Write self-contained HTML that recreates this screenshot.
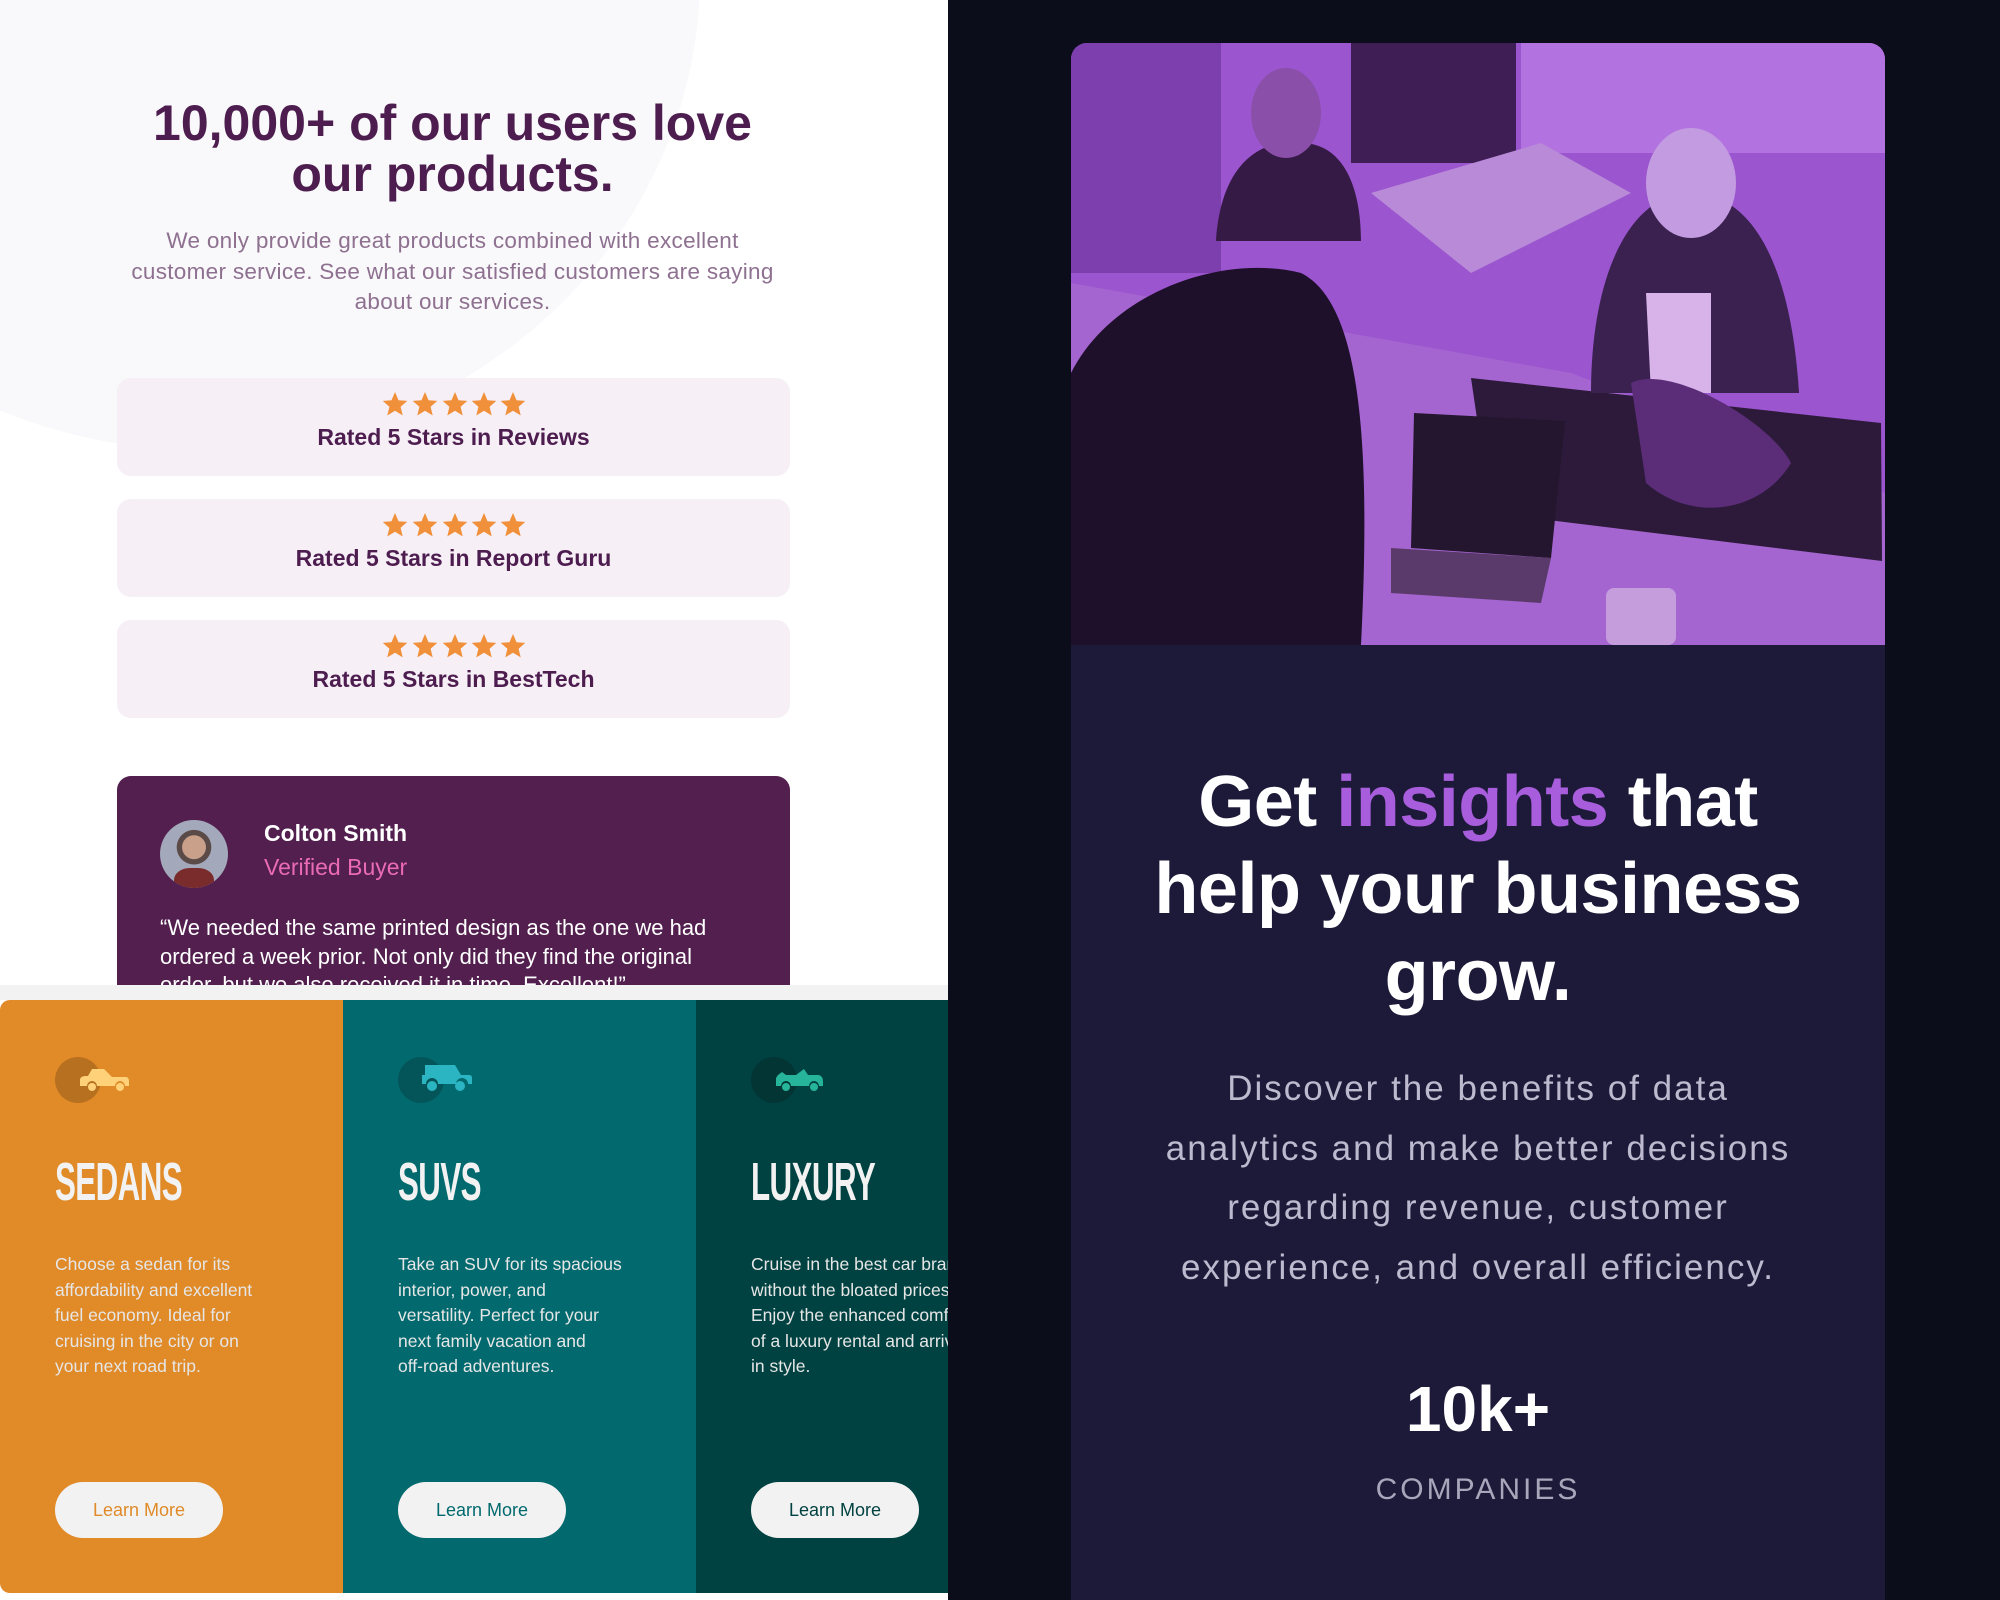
<!DOCTYPE html>
<html><head><meta charset="utf-8"><style>
*{margin:0;padding:0;box-sizing:border-box}
html{width:2000px;height:1600px;overflow:hidden}
body{width:2000px;height:1600px;overflow:hidden;background:#0b0d1a;font-family:"Liberation Sans",sans-serif;position:relative}
.left{position:absolute;left:0;top:0;width:948px;height:1600px;background:#fff;overflow:hidden}
.blob{position:absolute;left:-300px;top:-500px;width:1000px;height:950px;border-radius:50%;background:#f9f8fa}
h1{position:absolute;left:0;width:905px;top:98px;text-align:center;color:#4d1d4f;font-size:50px;line-height:51px;font-weight:bold}
.lp{position:absolute;left:120px;width:665px;top:226px;text-align:center;color:#8e7090;font-size:22.5px;line-height:30.5px;letter-spacing:.3px}
.rc{position:absolute;left:117px;width:673px;height:98px;background:#f6eff6;border-radius:14px;text-align:center;color:#4d1d4f;font-weight:bold;font-size:23px}
.rc .st{margin-top:14px;height:28px}
.rc .t{margin-top:4px}
.tm{position:absolute;left:117px;top:776px;width:673px;height:260px;background:#521f4f;border-radius:14px;color:#fff}
.av{position:absolute;left:43px;top:44px;width:68px;height:68px;border-radius:50%;background:radial-gradient(circle at 50% 40%,#c9a08a 0 22%,#5a4a48 23% 32%,#a3a8ba 33%);overflow:hidden}
.av:after{content:"";position:absolute;left:14px;top:48px;width:40px;height:30px;border-radius:40% 40% 0 0;background:#7a2b2b}
.nm{position:absolute;left:147px;top:44px;font-size:23px;font-weight:bold}
.vb{position:absolute;left:147px;top:78px;font-size:23px;color:#ea6bb5}
.q{position:absolute;left:43px;top:138px;width:565px;font-size:22px;line-height:28.5px}
.strip{position:absolute;left:0;top:985px;width:948px;height:15px;background:#f2f2f2}
.cars{position:absolute;left:0;top:1000px;width:948px;height:593px;overflow:hidden;border-radius:10px 0 0 10px}
.col{position:absolute;top:0;height:593px}
.ic{position:absolute;left:55px;top:57px;width:46px;height:46px;border-radius:50%}
.ic svg{position:absolute;left:23px;top:10px}
.col h2{position:absolute;left:55px;top:152px;font-size:54px;line-height:60px;color:#f2f2f2;font-weight:bold;transform:scaleX(.58);transform-origin:left;letter-spacing:-1px}
.col p{position:absolute;left:55px;top:252px;width:240px;font-size:17.5px;line-height:25.6px;color:#e6e6e6;white-space:nowrap}
.btn{position:absolute;left:55px;top:482px;width:168px;height:56px;border-radius:28px;background:#f2f2f2;font-size:18px;text-align:center;line-height:56px}
.card{position:absolute;left:1071px;top:43px;width:814px;height:1557px;background:#1c1a38;border-radius:16px 16px 0 0;overflow:hidden}
.card h3{position:absolute;left:0;width:814px;top:716px;text-align:center;color:#fff;font-size:72px;line-height:87px;font-weight:bold;letter-spacing:-.5px}
.card h3 span{color:#a85edc}
.card .dp{position:absolute;left:0;width:814px;top:1016px;text-align:center;color:#bdb9cf;font-size:35px;line-height:59.5px;letter-spacing:2px;white-space:nowrap}
.big{position:absolute;left:0;width:814px;text-align:center;color:#fff;font-weight:bold;font-size:64px}
.lab{position:absolute;left:0;width:814px;text-align:center;color:#a9a5bb;font-size:30px;letter-spacing:3px}
</style></head><body>
<div class="left">
<div class="blob"></div>
<h1>10,000+ of our users love<br>our products.</h1>
<div class="lp">We only provide great products combined with excellent customer service. See what our satisfied customers are saying about our services.</div>

<div class="rc" style="top:378px"><div class="st"><svg width="142" height="26" viewBox="0 0 142 26" fill="#f0903a"><g id="s"><path d="M12 0l3.5 8.2 8.8.7-6.7 5.8 2.1 8.7L12 18.7 4.3 23.4l2.1-8.7L-.3 8.9l8.8-.7z"/></g><use href="#s" x="30"/><use href="#s" x="60"/><use href="#s" x="89"/><use href="#s" x="118"/></svg></div><div class="t">Rated 5 Stars in Reviews</div></div>
<div class="rc" style="top:499px"><div class="st"><svg width="142" height="26" viewBox="0 0 142 26" fill="#f0903a"><use href="#s"/><use href="#s" x="30"/><use href="#s" x="60"/><use href="#s" x="89"/><use href="#s" x="118"/></svg></div><div class="t">Rated 5 Stars in Report Guru</div></div>
<div class="rc" style="top:620px"><div class="st"><svg width="142" height="26" viewBox="0 0 142 26" fill="#f0903a"><use href="#s"/><use href="#s" x="30"/><use href="#s" x="60"/><use href="#s" x="89"/><use href="#s" x="118"/></svg></div><div class="t">Rated 5 Stars in BestTech</div></div>

<div class="tm"><div class="av"></div><div class="nm">Colton Smith</div><div class="vb">Verified Buyer</div>
<div class="q">“We needed the same printed design as the one we had ordered a week prior. Not only did they find the original order, but we also received it in time. Excellent!”</div></div>
<div class="strip"></div>
<div class="cars">
<div class="col" style="left:0;width:343px;background:#e08a28">
<div class="ic" style="background:#b7701f"><svg width="52" height="26" viewBox="0 0 52 26" fill="#ffd27a"><path d="M14 2h12l8 8h14c2 0 3 2 3 4v5h-4a5 5 0 0 0-10 0H19a5 5 0 0 0-10 0H2v-6c0-3 3-4 6-4h2z"/><circle cx="14" cy="20" r="4"/><circle cx="42" cy="20" r="4"/></svg></div>
<h2>SEDANS</h2>
<p>Choose a sedan for its<br>affordability and excellent<br>fuel economy. Ideal for<br>cruising in the city or on<br>your next road trip.</p>
<div class="btn" style="color:#e08a28">Learn More</div></div>
<div class="col" style="left:343px;width:353px;background:#026a6e">
<div class="ic" style="left:55px;background:#045559"><svg width="52" height="30" viewBox="0 0 52 30" fill="#2bb5c2" style="top:6px"><path d="M4 2h30l6 10h8c2 0 3 1 3 3v6h-4a6 6 0 0 0-12 0H17a6 6 0 0 0-12 0H1v-9h3z"/><circle cx="11" cy="23" r="5"/><circle cx="39" cy="23" r="5"/></svg></div>
<h2>SUVS</h2>
<p>Take an SUV for its spacious<br>interior, power, and<br>versatility. Perfect for your<br>next family vacation and<br>off-road adventures.</p>
<div class="btn" style="color:#026a6e">Learn More</div></div>
<div class="col" style="left:696px;width:252px;background:#004241">
<div class="ic" style="background:#023534"><svg width="52" height="26" viewBox="0 0 52 26" fill="#26b59b"><path d="M4 8l4-3 4 3h10l8-6 4 6h10c3 0 5 3 5 6v5h-4a5 5 0 0 0-10 0H17a5 5 0 0 0-10 0H2v-8z"/><circle cx="12" cy="20" r="4"/><circle cx="40" cy="20" r="4"/></svg></div>
<h2>LUXURY</h2>
<p>Cruise in the best car brands<br>without the bloated prices.<br>Enjoy the enhanced comfort<br>of a luxury rental and arrive<br>in style.</p>
<div class="btn" style="color:#004241">Learn More</div></div>
</div>
</div>

<div class="card">
<svg width="814" height="602" viewBox="0 0 814 602" style="position:absolute;left:0;top:0">
<rect width="814" height="602" fill="#9b55cf"/>
<rect x="0" y="0" width="150" height="230" fill="#7e3fae"/>
<rect x="280" y="0" width="165" height="120" fill="#3f1d55"/>
<rect x="450" y="0" width="364" height="110" fill="#b273e0"/>
<path d="M300 150 L470 100 L560 150 L400 230 Z" fill="#b98ad8"/>
<path d="M145 198 C150 120 190 95 230 100 C270 100 290 140 290 198 Z" fill="#351a45"/>
<ellipse cx="215" cy="70" rx="35" ry="45" fill="#8a4fa8"/>
<path d="M0 240 L500 330 L814 450 L814 602 L0 602 Z" fill="#a465d0"/>
<path d="M400 335 L810 380 L811 518 L420 470 Z" fill="#2d1a3a"/>
<path d="M520 350 C520 230 560 150 620 150 C680 150 720 220 728 350 Z" fill="#3a2150"/>
<path d="M575 250 L640 250 L640 350 L580 350 Z" fill="#d7b3ea"/>
<ellipse cx="620" cy="140" rx="45" ry="55" fill="#c39be0"/>
<path d="M0 602 L0 330 C40 250 150 210 230 230 C290 260 300 400 290 602 Z" fill="#1e0f2a"/>
<path d="M343 370 L494 378 L480 515 L340 505 Z" fill="#24162e"/>
<path d="M320 505 L480 515 L470 560 L320 550 Z" fill="#5a3a6a"/>
<rect x="535" y="545" width="70" height="57" rx="8" fill="#c59ddd"/>
<path d="M560 340 C600 320 700 380 720 420 C690 470 620 480 575 440 Z" fill="#5b2d78"/>
</svg>
<h3>Get <span>insights</span> that<br>help your business<br>grow.</h3>
<div class="dp">Discover the benefits of data<br>analytics and make better decisions<br>regarding revenue, customer<br>experience, and overall efficiency.</div>
<div class="big" style="top:1329px">10k+</div>
<div class="lab" style="top:1430px">COMPANIES</div>
<div class="big" style="top:1550px">314</div>
</div>
</body></html>
